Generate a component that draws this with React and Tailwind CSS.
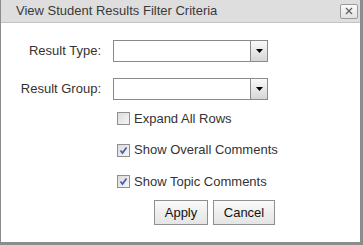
import { useState } from "react";

const Select = () => (
  <div className="flex h-[22px] w-[155px] border border-[#8a8a8a] bg-white">
    <div className="flex-1" />
    <div className="flex w-[17px] items-center justify-center border-l border-[#8a8a8a] bg-gradient-to-b from-[#fafafa] to-[#d6d6d6]">
      <svg width="7" height="4" viewBox="0 0 7 4">
        <path d="M0 0h7L3.5 4z" fill="#000" />
      </svg>
    </div>
  </div>
);

const Check = ({ label, checked, onToggle }) => (
  <label className="flex h-[15px] cursor-pointer items-center gap-[4px]" onClick={onToggle}>
    <span className="flex h-[13px] w-[13px] items-center justify-center border border-[#8f8f8f] bg-gradient-to-br from-[#dcdcdc] to-[#f6f6f6]">
      {checked && (
        <svg width="9" height="9" viewBox="0 0 9 9">
          <path d="M1.5 4.5 L3.5 7 L7.5 1.5" stroke="#4a5fb0" strokeWidth="1.8" fill="none" />
        </svg>
      )}
    </span>
    <span>{label}</span>
  </label>
);

export default function App() {
  const [expand, setExpand] = useState(false);
  const [overall, setOverall] = useState(true);
  const [topic, setTopic] = useState(true);

  return (
    <div className="h-[245px] w-[363px] border-l border-r-[3px] border-b-[3px] border-[#8c8c8c] bg-white font-['Liberation_Sans',Arial,sans-serif] text-[13px] text-[#333]">
      <div className="flex h-[23px] items-center justify-between border-b border-[#c4c4c4] bg-[#dedede] pl-[15px] pr-[2px]">
        <span className="text-[13px] text-[#3a3a3a]">View Student Results Filter Criteria</span>
        <button className="flex h-[15px] w-[18px] items-center justify-center rounded-[2px] border border-[#9a9a9a] bg-gradient-to-b from-[#fafafa] to-[#e2e2e2]">
          <svg width="8" height="8" viewBox="0 0 8 8">
            <path d="M1 1L7 7M7 1L1 7" stroke="#666" strokeWidth="1.4" />
          </svg>
        </button>
      </div>

      <div className="grid grid-cols-[100px_155px] items-center gap-x-[12px] gap-y-[16px] pt-[17px]">
        <span className="text-right">Result Type:</span>
        <Select />
        <span className="text-right">Result Group:</span>
        <Select />
      </div>

      <div className="ml-[116px] mt-[11px] flex flex-col gap-[16.5px]">
        <Check label="Expand All Rows" checked={expand} onToggle={() => setExpand(!expand)} />
        <Check label="Show Overall Comments" checked={overall} onToggle={() => setOverall(!overall)} />
        <Check label="Show Topic Comments" checked={topic} onToggle={() => setTopic(!topic)} />
      </div>

      <div className="ml-[153px] mt-[11px] flex gap-[5px]">
        <button className="h-[25px] w-[54px] border border-[#8f8f8f] bg-gradient-to-b from-[#fafafa] to-[#e4e4e4] text-[#111]">Apply</button>
        <button className="h-[25px] w-[62px] border border-[#8f8f8f] bg-gradient-to-b from-[#fafafa] to-[#e4e4e4] text-[#111]">Cancel</button>
      </div>
    </div>
  );
}
